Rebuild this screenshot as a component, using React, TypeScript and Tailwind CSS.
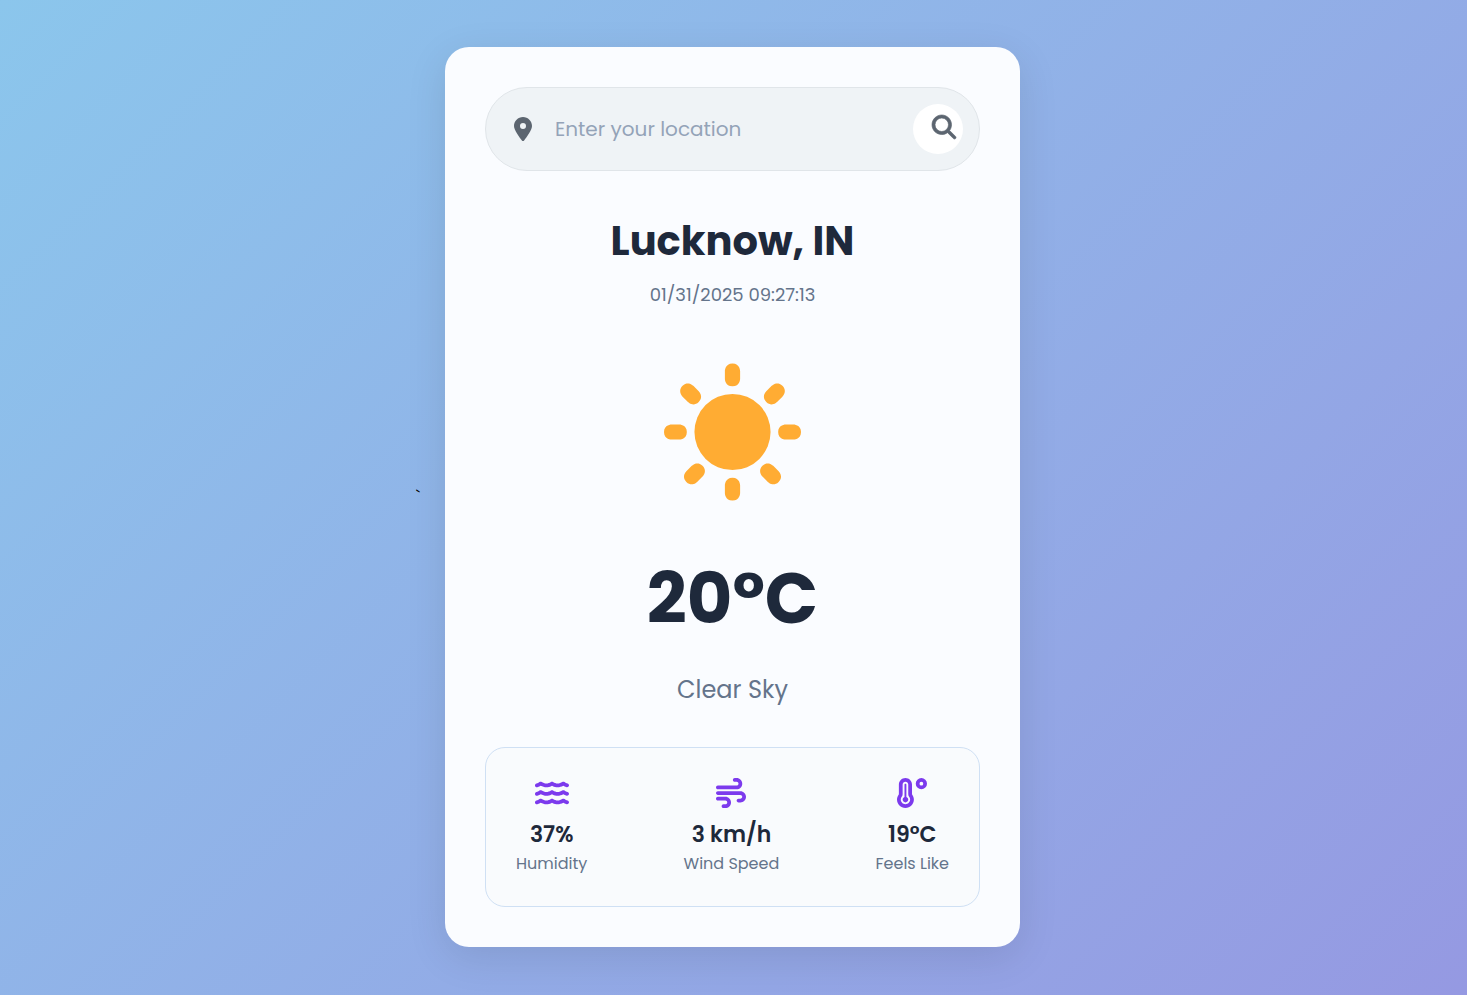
import { useState } from "react";
import type { IconType } from "react-icons";
import {
  FaLocationDot,
  FaMagnifyingGlass,
  FaTemperatureHigh,
  FaWater,
  FaWind,
} from "react-icons/fa6";

interface Stat {
  icon: IconType;
  iconSize: string;
  value: string;
  label: string;
}

const stats: Stat[] = [
  { icon: FaWater, iconSize: "size-[34px]", value: "37%", label: "Humidity" },
  { icon: FaWind, iconSize: "size-[30px]", value: "3 km/h", label: "Wind Speed" },
  { icon: FaTemperatureHigh, iconSize: "size-[30px]", value: "19°C", label: "Feels Like" },
];

function SunIcon() {
  return (
    <svg viewBox="0 0 36 36" className="h-[138px] w-[137px]" fill="#ffac33" aria-hidden="true">
      <path d="M16 2s0-2 2-2 2 2 2 2v2s0 2-2 2-2-2-2-2V2zm18 14s2 0 2 2-2 2-2 2h-2s-2 0-2-2 2-2 2-2h2zM4 16s2 0 2 2-2 2-2 2H2s-2 0-2-2 2-2 2-2h2zm5.121-8.707s1.414 1.414 0 2.828-2.828 0-2.828 0L4.878 8.708s-1.414-1.414 0-2.829c1.415-1.414 2.829 0 2.829 0l1.414 1.414zm21 21s1.414 1.414 0 2.828-2.828 0-2.828 0l-1.414-1.414s-1.414-1.414 0-2.828 2.828 0 2.828 0l1.414 1.414zm-.413-18.172s-1.414 1.414-2.828 0 0-2.828 0-2.828l1.414-1.414s1.414-1.414 2.828 0 0 2.828 0 2.828l-1.414 1.414zm-21 21s-1.414 1.414-2.828 0 0-2.828 0-2.828l1.414-1.414s1.414-1.414 2.828 0 0 2.828 0 2.828l-1.414 1.414zM16 32s0-2 2-2 2 2 2 2v2s0 2-2 2-2-2-2-2v-2z" />
      <circle cx="18" cy="18" r="10" />
    </svg>
  );
}

function SearchBar() {
  const [query, setQuery] = useState("");
  return (
    <form
      onSubmit={(e) => e.preventDefault()}
      className="flex h-21 items-center rounded-full border border-[#e0e5e9] bg-[#eff3f6] pr-4 pl-7"
    >
      <label htmlFor="location" className="text-[#5c6570]" aria-label="Location">
        <FaLocationDot className="h-6 w-[18px]" />
      </label>
      <input
        id="location"
        type="text"
        value={query}
        onChange={(e) => setQuery(e.target.value)}
        placeholder="Enter your location"
        className="ml-[23px] h-12 min-w-0 flex-1 bg-transparent text-xl text-[#1e293b] outline-none placeholder:text-[#94a3b8]"
      />
      <button
        type="submit"
        aria-label="Search"
        className="flex size-[50px] items-center justify-end rounded-full bg-white pr-[7px] pb-1 text-[#5c6570]"
      >
        <FaMagnifyingGlass className="size-6 overflow-visible stroke-current stroke-[14px]" />
      </button>
    </form>
  );
}

export default function App() {
  return (
    <main className="grid min-h-screen grid-cols-[1fr_auto_1fr] items-center bg-linear-135 from-[#8bc6ec] to-[#9599e2] pt-[47px] pr-0.5 pb-12 font-['Poppins','Inter',sans-serif]">
      <span className="justify-self-end pr-[25px] text-base text-black">`</span>
      <section className="w-[575px] max-w-full rounded-3xl bg-[#fafcff] p-10 shadow-[0_10px_40px_rgba(0,0,0,0.1)]">
        <SearchBar />
        <div className="flex flex-col items-center text-center">
          <h1 className="mt-10 text-[40px] leading-[60px] font-bold text-[#1e293b]">Lucknow, IN</h1>
          <p className="mt-2.5 text-lg leading-7 text-[#64748b]">01/31/2025 09:27:13</p>
          <div className="mt-[54px]">
            <SunIcon />
          </div>
          <p className="mt-[62px] text-[70px] leading-[72px] font-bold text-[#1e293b]">20°C</p>
          <p className="mt-[37px] text-2xl leading-9 text-[#64748b]">Clear Sky</p>
        </div>
        <ul className="mt-[39px] flex h-40 justify-between rounded-[20px] border border-[#cfe0f4] bg-[#f9fbfd] px-[30px] pt-[30px]">
          {stats.map(({ icon: Icon, iconSize, value, label }) => (
            <li key={label} className="flex flex-col items-center">
              <span className="flex h-[30px] items-center text-[#7c3aed]">
                <Icon className={iconSize} />
              </span>
              <span className="mt-[11px] text-[22px] leading-8 font-semibold text-[#1e293b]">{value}</span>
              <span className="mt-px text-base leading-6 text-[#64748b]">{label}</span>
            </li>
          ))}
        </ul>
      </section>
    </main>
  );
}
